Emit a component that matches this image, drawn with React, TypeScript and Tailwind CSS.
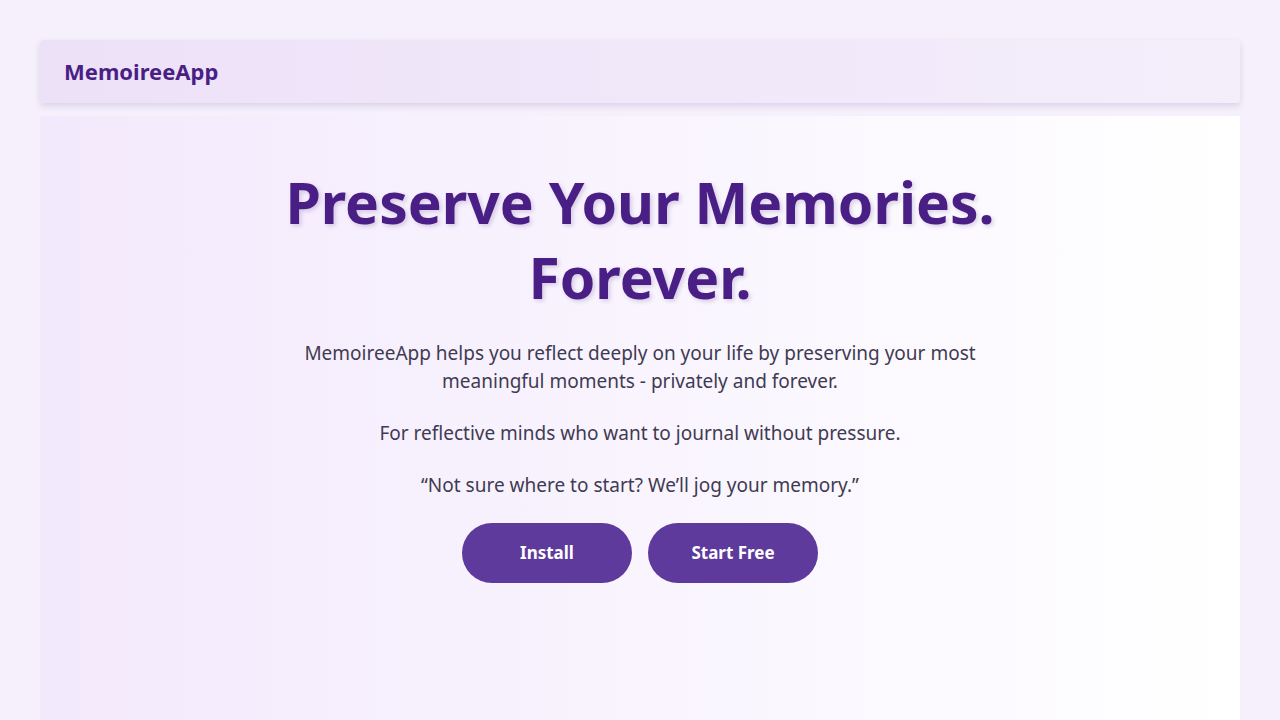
export default function App() {
  return (
    <div
      className="min-h-screen bg-[#f5f0fb] px-10 pt-10"
      style={{ fontFamily: '"Noto Sans", "Open Sans", sans-serif' }}
    >
      <header className="flex h-[63px] items-center rounded-sm bg-gradient-to-r from-[#ede1f8] to-[#f4eefb] px-6 shadow-[0_3px_6px_rgba(80,40,140,0.15)]">
        <span className="text-[22px] font-bold text-[#4a1f85]">MemoireeApp</span>
      </header>

      <main className="mt-[13px] min-h-[620px] bg-gradient-to-r from-[#f3e9fc] via-[#f9f4fe] to-white px-6 pt-[49px] pb-16">
        <div className="mx-auto flex max-w-[760px] flex-col items-center text-center">
          <h1 className="text-[57px] font-bold leading-[75px] text-[#4a1f85] [text-shadow:2px_2px_4px_rgba(60,20,110,0.18)]">
            Preserve Your Memories.
            <br />
            Forever.
          </h1>

          <p className="mt-6 max-w-[720px] text-[19px] leading-[28px] text-[#3f3b52]">
            MemoireeApp helps you reflect deeply on your life by preserving your most meaningful moments - privately and forever.
          </p>

          <p className="mt-6 text-[19px] leading-[28px] text-[#3f3b52]">
            For reflective minds who want to journal without pressure.
          </p>

          <p className="mt-6 text-[19px] leading-[28px] text-[#3f3b52]">
            “Not sure where to start? We’ll jog your memory.”
          </p>

          <div className="mt-6 flex gap-4">
            <button className="h-[60px] w-[170px] rounded-full bg-[#5d3a9b] text-[17px] font-bold text-white">
              Install
            </button>
            <button className="h-[60px] w-[170px] rounded-full bg-[#5d3a9b] text-[17px] font-bold text-white">
              Start Free
            </button>
          </div>
        </div>
      </main>
    </div>
  );
}
